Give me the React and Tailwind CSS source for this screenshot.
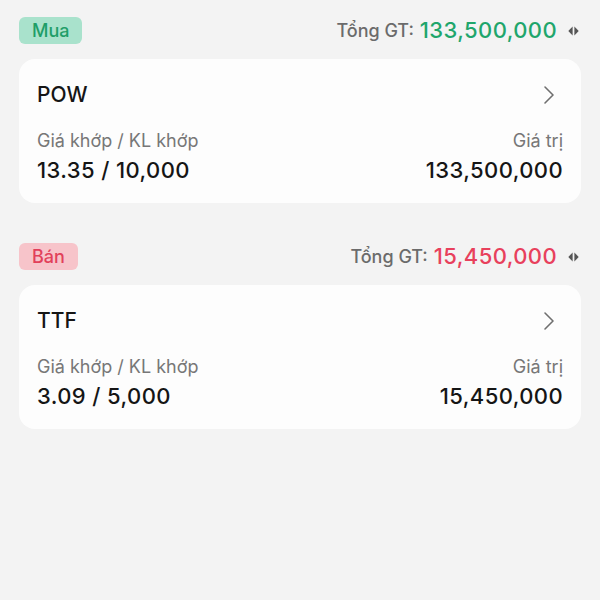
import React from "react";

const orders = [
  {
    side: "Mua",
    badge: "bg-[#a9e2cc] text-[#1f9e68]",
    total: "133,500,000",
    totalColor: "text-[#1fa66c]",
    symbol: "POW",
    match: "13.35 / 10,000",
    value: "133,500,000",
  },
  {
    side: "Bán",
    badge: "bg-[#f7c4ca] text-[#e2405a]",
    total: "15,450,000",
    totalColor: "text-[#e8405c]",
    symbol: "TTF",
    match: "3.09 / 5,000",
    value: "15,450,000",
  },
];

function SwapIcon() {
  return (
    <svg width="11" height="10" viewBox="0 0 11 10" className="text-[#555]">
      <path d="M4.6 0.5 L0.3 5 L4.6 9.5 Z" fill="currentColor" />
      <path d="M6.4 0.5 L10.7 5 L6.4 9.5 Z" fill="currentColor" />
    </svg>
  );
}

function Chevron() {
  return (
    <svg width="12" height="20" viewBox="0 0 12 20" fill="none">
      <path d="M2 2 L10 10 L2 18" stroke="#6f6f6f" strokeWidth="1.6" strokeLinecap="round" strokeLinejoin="round" />
    </svg>
  );
}

export default function App() {
  return (
    <main
      className="w-[600px] h-[600px] bg-[#f3f3f3] px-[19px] pt-[17px] flex flex-col gap-[40px]"
      style={{ fontFamily: "Inter, 'Noto Sans', sans-serif" }}
    >
      {orders.map((o) => (
        <section key={o.side} className="flex flex-col gap-[15px]">
          {/* header */}
          <div className="flex items-center justify-between h-[27px]">
            <span className={`h-[27px] px-[13px] rounded-[6px] flex items-center text-[18px] font-medium ${o.badge}`}>
              {o.side}
            </span>
            <div className="flex items-center">
              <span className="text-[18px] font-medium text-[#6b6b6b] mr-[6px]">Tổng GT:</span>
              <span className={`text-[22px] font-medium tracking-[0.4px] ${o.totalColor}`}>{o.total}</span>
              <span className="ml-[11px] mr-[2px] flex">
                <SwapIcon />
              </span>
            </div>
          </div>

          {/* card */}
          <div className="bg-[#fdfdfd] rounded-[16px] px-[18px] pt-[22px] pb-[20px]">
            <div className="flex items-center justify-between h-[28px]">
              <span className="text-[21px] font-medium text-[#151515]">{o.symbol}</span>
              <span className="mr-[8px] flex">
                <Chevron />
              </span>
            </div>
            <div className="flex justify-between mt-[21px]">
              <div className="flex flex-col gap-[5px]">
                <span className="text-[18px] leading-[22px] text-[#777777]">Giá khớp / KL khớp</span>
                <span className="text-[22px] leading-[26px] font-medium text-[#151515] tracking-[0.4px]">{o.match}</span>
              </div>
              <div className="flex flex-col items-end gap-[5px]">
                <span className="text-[18px] leading-[22px] text-[#777777]">Giá trị</span>
                <span className="text-[22px] leading-[26px] font-medium text-[#151515] tracking-[0.4px]">{o.value}</span>
              </div>
            </div>
          </div>
        </section>
      ))}
    </main>
  );
}
